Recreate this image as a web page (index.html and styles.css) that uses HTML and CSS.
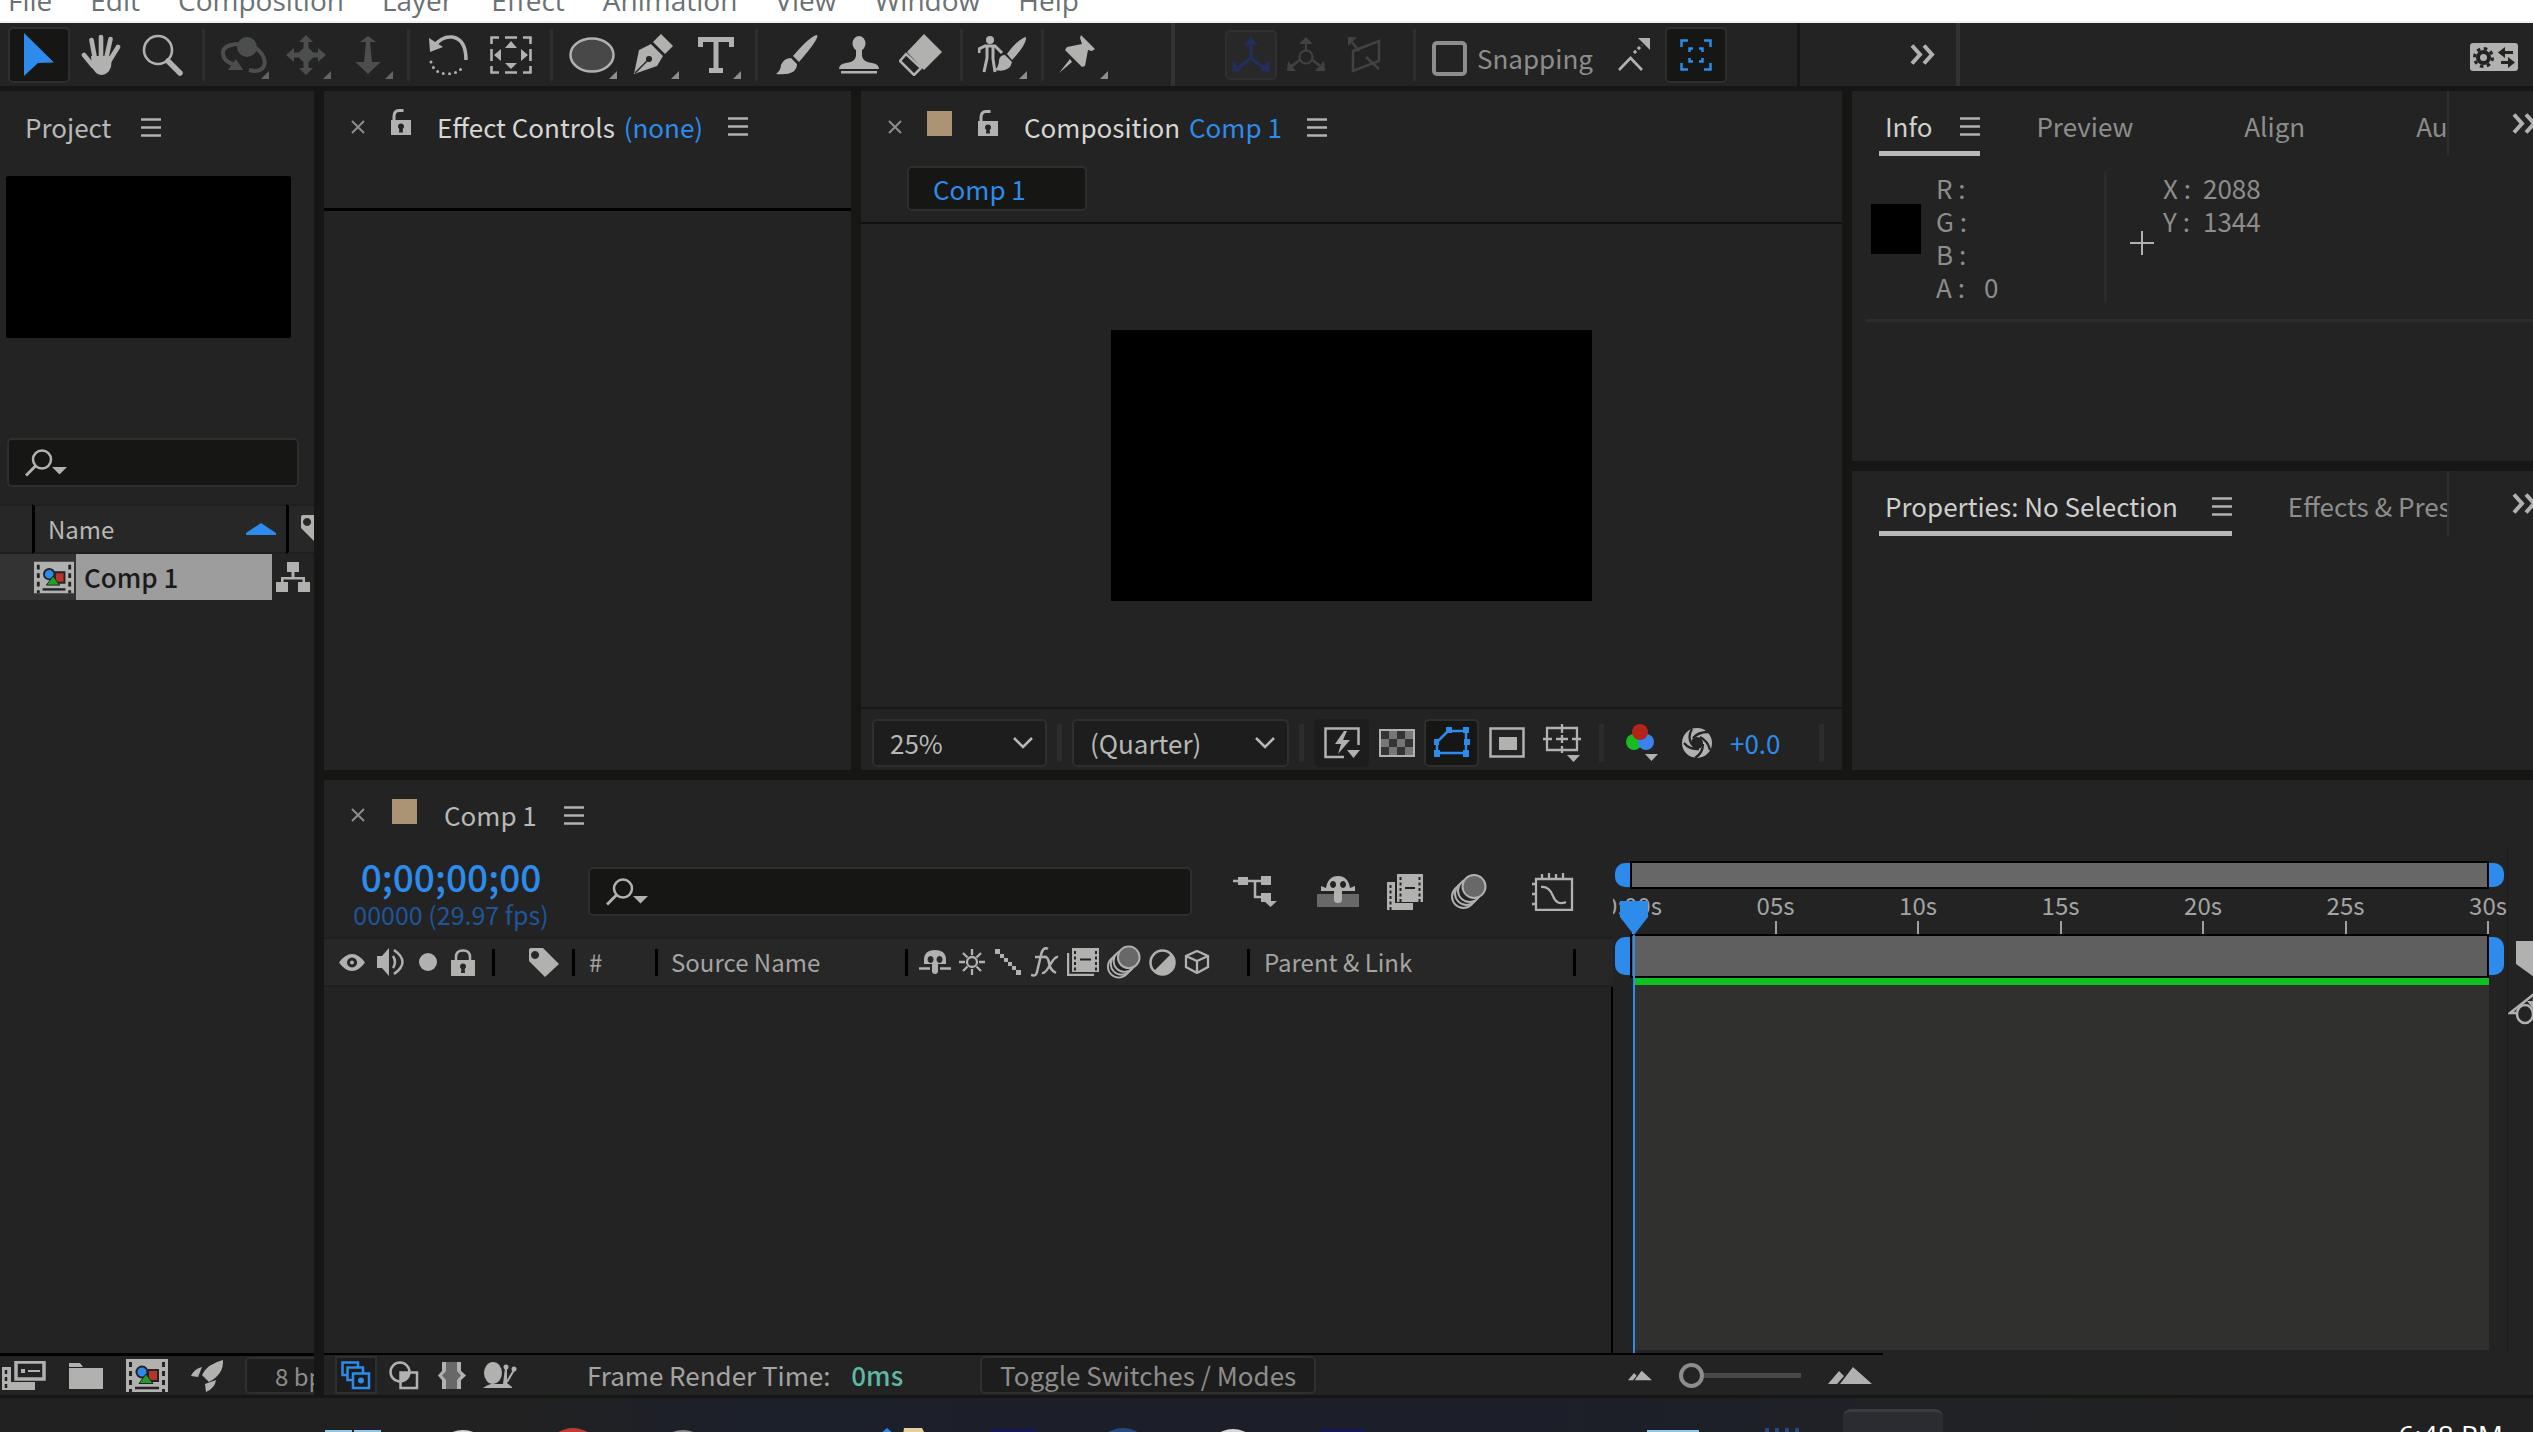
FILE: index.html
```html
<!DOCTYPE html>
<html lang="en">
<head>
<meta charset="utf-8">
<title>Comp 1</title>
<link rel="stylesheet" href="styles.css">
</head>
<body>
<svg class="sprite" aria-hidden="true">
  <symbol id="lock-open" viewBox="0 0 22 27"><path d="M4 12V7.500Q4 1.500 9 1.500H13.500" fill="none" stroke="currentColor" stroke-width="3"/><path fill-rule="evenodd" d="M1 11H21V26H1ZM11 14.500a3 3 0 0 0-1.700 5.500L9 23.500H13L12.700 20A3 3 0 0 0 11 14.500Z" fill="currentColor"/></symbol>
  <symbol id="lock" viewBox="0 0 24 27"><path d="M5 12V8Q5 1.500 12 1.500T19 8V12" fill="none" stroke="currentColor" stroke-width="2.500"/><path fill-rule="evenodd" d="M0 11H24V27H0ZM12 14.500a3 3 0 0 0-1.700 5.500L10 24H14L13.700 20A3 3 0 0 0 12 14.500Z" fill="currentColor"/></symbol>
  <symbol id="menu" viewBox="0 0 20 19"><path d="M0 1.500H20M0 9.500H20M0 17.500H20" stroke="currentColor" stroke-width="2.500"/></symbol>
  <symbol id="close" viewBox="0 0 14 14"><path d="M1 1L13 13M13 1L1 13" stroke="currentColor" stroke-width="2"/></symbol>
  <symbol id="search" viewBox="0 0 42 28"><circle cx="17" cy="10.500" r="9" fill="none" stroke="currentColor" stroke-width="2.500"/><path d="M10.500 17L1 26.500" stroke="currentColor" stroke-width="3"/><path d="M27 18H42L34.500 25.500Z" fill="currentColor"/></symbol>
  <symbol id="more" viewBox="0 0 26 21"><path d="M2 1.500L10 10.500L2 19.500M14 1.500L22 10.500L14 19.500" fill="none" stroke="currentColor" stroke-width="4"/></symbol>
  <symbol id="comp" viewBox="0 0 42 33"><path d="M0 0H42V33H0Z" fill="#b1b1af"/><path d="M4.500 3V33M37.500 3V33" stroke="#232323" stroke-width="3" stroke-dasharray="5 4"/><path d="M9 29H33" stroke="#232323" stroke-width="2.500"/><path d="M22 11H32V22H22Z" fill="#b8342b" stroke="#232323" stroke-width="2"/><circle cx="16" cy="13" r="5.500" fill="#2d8ceb" stroke="#232323" stroke-width="2"/><path d="M20 15L27 24.500H13Z" fill="#1fa02a" stroke="#232323" stroke-width="1"/></symbol>
  <symbol id="tag" viewBox="0 0 30 29"><path fill-rule="evenodd" d="M0 2Q0 0 2 0H14L30 16L16 29L0 13ZM6 3a4 4 0 1 0 .1 0Z" fill="currentColor"/></symbol>
  <symbol id="shy" viewBox="0 0 32 26"><path fill-rule="evenodd" d="M5 15V11Q5 1 16 1T27 11V15H19V22Q19 25 16 25T13 22V15ZM11.500 7a3 3.500 0 1 0 .1 0ZM20.500 7a3 3.500 0 1 0 .1 0Z" fill="currentColor"/><path d="M0 19.500H11M21 19.500H32" stroke="currentColor" stroke-width="2.500"/></symbol>
  <symbol id="film" viewBox="0 0 32 28"><path d="M1 5V27H27" fill="none" stroke="currentColor" stroke-width="2.500"/><path d="M5 0H32V24H5Z" fill="currentColor"/><path d="M8 3V24M29 3V24" stroke="#232323" stroke-width="2" stroke-dasharray="3 2.500"/><path d="M13 11.500H24" stroke="#232323" stroke-width="2"/></symbol>
  <symbol id="blur" viewBox="0 0 36 35"><g fill="#232323" stroke="currentColor" stroke-width="2"><circle cx="12.500" cy="22.500" r="11.500"/><circle cx="15.500" cy="19.500" r="11.500"/><circle cx="18.500" cy="16.500" r="11.500"/><circle cx="23" cy="12.500" r="11.500" fill="#686868"/></g></symbol>
  <symbol id="down" viewBox="0 0 20 12"><path d="M1 1L10 10L19 1" fill="none" stroke="currentColor" stroke-width="2.500"/></symbol>
  <symbol id="hills" viewBox="0 0 44 17"><path d="M0 17L11 4L16 9L9 17ZM12 17L25 0L44 17Z" fill="currentColor"/></symbol>
</svg>

<nav class="menubar" aria-label="Main menu">
  <a href="#">File</a><a href="#">Edit</a><a href="#">Composition</a><a href="#">Layer</a><a href="#">Effect</a><a href="#">Animation</a><a href="#">View</a><a href="#">Window</a><a href="#">Help</a>
</nav>

<header class="toolbar">
  <div class="tools">
    <button class="tool active" aria-label="Selection tool"><svg width="30" height="43"><path d="M0 0L30 29.500L14 30L0 43Z" fill="#2d8ceb"/></svg></button>
    <button class="tool" aria-label="Hand tool"><svg width="40" height="41" viewBox="0 0 40 41"><g stroke="currentColor" stroke-width="4.600" stroke-linecap="round"><path d="M14 25L10.500 6M20 22V3M25.500 23L29.500 5M29 26L37 13M12 32L3 21"/></g><path d="M10 22L31 22L30 33Q27 41 20 41Q14 40 11 33Z" fill="currentColor"/></svg></button>
    <button class="tool" aria-label="Zoom tool"><svg width="42" height="42" fill="none" stroke="currentColor"><circle cx="16" cy="16" r="14" stroke-width="2.600"/><path d="M26 27L38 39" stroke-width="5.500" stroke-linecap="round"/></svg></button>
  </div>
  <span class="rule"></span>
  <div class="tools">
    <button class="tool more off" aria-label="Orbit tool"><svg width="46" height="38"><circle cx="26" cy="11" r="10" fill="currentColor"/><path d="M17 8Q1 9 2 18Q3 26 14 29M35 12Q46 21 43 30Q39 37 28 34" fill="none" stroke="currentColor" stroke-width="4"/><path d="M15 23L22 34H7Z" fill="currentColor"/></svg></button>
    <button class="tool more off" aria-label="Pan tool"><svg width="40" height="42"><path d="M20 1L27 8H22.500V14L27 18.500H32V14L40 21L32 28V23.500H27L22.500 28V34H27L20 41L13 34H17.500V28L13 23.500H8V28L0 21L8 14V18.500H13L17.500 14V8H13Z" fill="currentColor"/><circle cx="20" cy="21" r="7" fill="currentColor"/></svg></button>
    <button class="tool more off" aria-label="Dolly tool"><svg width="26" height="38"><path d="M13 0L21 6H15L17 26H25.500L13 38L.5 26H9L11 6H5Z" fill="currentColor"/></svg></button>
  </div>
  <span class="rule"></span>
  <div class="tools">
    <button class="tool" aria-label="Rotate tool"><svg width="42" height="42"><path d="M6 12Q14 2 24 3Q38 5 38 26" fill="none" stroke="currentColor" stroke-width="3.500"/><path d="M1 4L2 18L15 13Z" fill="currentColor"/><path d="M3 28Q6 40 20 40Q32 39 36 31" fill="none" stroke="currentColor" stroke-width="3" stroke-linecap="round" stroke-dasharray="0 6"/></svg></button>
    <button class="tool" aria-label="Pan behind tool"><svg width="42" height="38"><path d="M1.500 8V1.500H9M15 1.500H27M33 1.500H40.500V8M40.500 30V36.500H33M27 36.500H15M9 36.500H1.500V30M1.500 13V25M40.500 13V25" fill="none" stroke="currentColor" stroke-width="2.600"/><path d="M21 5L27 12H15ZM21 33L15 27H27ZM4 19L11 13V25ZM38 19L31 13V25Z" fill="currentColor"/></svg></button>
  </div>
  <span class="rule"></span>
  <div class="tools">
    <button class="tool more" aria-label="Ellipse tool"><svg width="46" height="36"><ellipse cx="23" cy="18" rx="21.500" ry="16.500" fill="#484848" stroke="currentColor" stroke-width="2.500"/></svg></button>
    <button class="tool more" aria-label="Pen tool"><svg width="42" height="42"><path d="M1 40L6 16L18 10L30 22L24 32ZM2 39L15 26" fill="currentColor"/><path d="M2 39L15 26" stroke="#232323" stroke-width="1.500"/><circle cx="16" cy="25" r="3" fill="#232323"/><path d="M20 8L28 0L40 12L32 20Z" fill="currentColor"/></svg></button>
    <button class="tool more" aria-label="Type tool"><svg width="36" height="36"><path d="M0 0H36V10H31V5H20.500V31H25V36H11V31H15.500V5H5V10H0Z" fill="currentColor"/></svg></button>
  </div>
  <span class="rule"></span>
  <div class="tools">
    <button class="tool" aria-label="Brush tool"><svg width="42" height="42"><path d="M41 1Q44 4 23 28L17 22Q34 2 41 1ZM15 24L21 30Q21 42 0 40Q5 36 5 31Q8 24 15 24Z" fill="currentColor"/></svg></button>
    <button class="tool" aria-label="Clone stamp tool"><svg width="42" height="38"><ellipse cx="21" cy="7.500" rx="6.500" ry="7.500" fill="currentColor"/><path d="M18 12H24V20Q25 26 34 27Q41 28 41 33H1Q1 28 8 27Q17 26 18 20ZM3 35H39V37.500H3Z" fill="currentColor"/></svg></button>
    <button class="tool" aria-label="Eraser tool"><svg width="44" height="42"><path d="M25 0L43 18L25 36L8 18Z" fill="currentColor"/><path d="M7 20L22 34L15 41L1 27Z" fill="#232323" stroke="currentColor" stroke-width="2.500"/></svg></button>
  </div>
  <span class="rule"></span>
  <div class="tools">
    <button class="tool more" aria-label="Roto brush tool"><svg width="48" height="38"><circle cx="12" cy="4" r="4" fill="currentColor"/><path d="M1 17V13L7 10H17L24 17M9 10V22L6 36M15 10V23L17 36" fill="none" stroke="currentColor" stroke-width="3"/><path d="M48 1Q49 8 34 24L29 18Q40 3 48 1ZM27 19L34 26Q32 37 17 34Q21 30 21 24Q22 19 27 19Z" fill="currentColor"/></svg></button>
  </div>
  <span class="rule"></span>
  <div class="tools">
    <button class="tool more" aria-label="Puppet pin tool"><svg width="48" height="40"><path d="M22 0L36 14L33 16L29 15L26 31L23 32L6 15L8 12L23 9L21 3ZM11 24L13 27L0 38Z" fill="currentColor"/></svg></button>
  </div>
  <div class="axes">
    <button class="tool axis framed" aria-label="Local axis mode"><svg width="40" height="36" fill="currentColor"><path d="M18.500 5H21.500V20L33 29L31 32L20 23L9 32L7 29L18.500 20ZM20 0L27 8H13ZM2 23L10 34L1 35ZM38 23L39 35L29 34Z"/></svg></button>
    <button class="tool axis dim" aria-label="World axis mode"><svg width="40" height="36" fill="currentColor"><path d="M19 5H21V13H19ZM14 24L7 30L5 28L13 22ZM26 24L33 30L35 28L27 22ZM20 0L27 7H13ZM2 24L10 34L1 34ZM38 24L39 34L29 34Z"/><circle cx="20" cy="20" r="6.500" fill="none" stroke="currentColor" stroke-width="2"/></svg></button>
    <button class="tool axis dim" aria-label="View axis mode"><svg width="34" height="36" fill="none" stroke="currentColor" stroke-width="2.500"><path d="M6 14L32 4V24L6 34ZM19 20L32 32M12 14L4 4"/><path d="M1 0H10L1 9Z" fill="currentColor" stroke="none"/></svg></button>
  </div>
  <span class="rule"></span>
  <label class="snapping"><input type="checkbox">Snapping</label>
  <button class="tool" aria-label="Snap to edges"><svg width="34" height="34"><path d="M2 32L13.500 20L25 32" fill="none" stroke="currentColor" stroke-width="2.600"/><path d="M17 15L25 7" stroke="currentColor" stroke-width="3" stroke-dasharray="3 2.500"/><path d="M21 0H33V12Z" fill="currentColor"/></svg></button>
  <button class="tool active" aria-label="Snap to features"><svg width="32" height="32" fill="none" stroke="#2d8ceb" stroke-width="2.500"><path d="M1.500 8V1.500H8M24 1.500H30.500V8M30.500 24V30.500H24M8 30.500H1.500V24M9.500 13V9.500H13M19 9.500H22.500V13M22.500 19V22.500H19M13 22.500H9.500V19"/></svg></button>
  <div class="overflow"><button class="plain" aria-label="More tools"><svg width="26" height="21"><use href="#more"/></svg></button></div>
  <button class="plain workspace" aria-label="Workspace settings"><svg width="48" height="28"><rect width="48" height="28" rx="3" fill="#b1b1af"/><circle cx="13.500" cy="14.500" r="5.500" fill="none" stroke="#232323" stroke-width="4"/><circle cx="13.500" cy="14.500" r="9" fill="none" stroke="#232323" stroke-width="3" stroke-dasharray="3.500 3.570"/><path d="M28 9.500L35 4V8H43V11H35V15ZM45 19.500L38 14V18H31V21H38V25Z" fill="#232323"/></svg></button>
</header>

<main class="workspace-grid">
  <section class="panel project">
    <div class="panel-head">
      <h2>Project</h2>
      <button class="plain" aria-label="Project menu"><svg width="20" height="19"><use href="#menu"/></svg></button>
    </div>
    <div class="thumb"></div>
    <label class="search"><svg width="42" height="28"><use href="#search"/></svg><input type="search" aria-label="Search project"></label>
    <table class="items">
      <thead><tr><th class="lead"></th><th class="name"><div>Name<svg width="30" height="12"><path d="M15 0L30 10V12H0V10Z" fill="#2d8ceb"/></svg></div></th><th class="label"><svg width="30" height="29"><use href="#tag"/></svg></th></tr></thead>
      <tbody><tr><td class="lead"><svg width="40" height="33"><use href="#comp"/></svg></td><td class="name">Comp 1</td><td class="label"><svg width="34" height="31"><path d="M11 0H23V10H18.500V15H29V20H34V30H22V20H26.500V17.500H7.500V20H12V30H0V20H5V15H15.500V10H11Z" fill="currentColor"/></svg></td></tr></tbody>
    </table>
    <div class="project-foot">
      <button class="plain" aria-label="Interpret footage"><svg width="44" height="29"><path d="M14 1H42V18H14Z" fill="none" stroke="currentColor" stroke-width="3.500"/><path d="M19 8H23V12H19ZM26 9H38V11H26Z" fill="currentColor"/><path d="M0 6H9V21H33V29H0Z" fill="currentColor"/><path d="M4 9V29" stroke="#232323" stroke-width="2.500" stroke-dasharray="4 3"/></svg></button>
      <button class="plain" aria-label="New folder"><svg width="34" height="26"><path d="M0 0H11L14 4H0ZM0 5H34V26H0Z" fill="currentColor"/></svg></button>
      <button class="plain" aria-label="New composition"><svg width="42" height="33"><use href="#comp"/></svg></button>
      <button class="plain" aria-label="Project settings"><svg width="33" height="32"><path d="M32 0Q33 14 18 22L11 15Q16 4 32 0ZM11 7L7 17L0 16Q3 9 11 7ZM25 20Q24 28 15 32L14 24Z" fill="currentColor"/></svg></button>
      <button class="depth">8 bpc</button>
    </div>
  </section>

  <div class="right-side">
    <div class="upper">
      <section class="panel effects">
        <div class="panel-head tall">
          <button class="plain close" aria-label="Close"><svg width="14" height="14"><use href="#close"/></svg></button>
          <svg class="raised" width="22" height="27"><use href="#lock-open"/></svg>
          <h2 class="bright">Effect Controls <span class="accent">(none)</span></h2>
          <button class="plain" aria-label="Effect controls menu"><svg width="20" height="19"><use href="#menu"/></svg></button>
        </div>
      </section>

      <section class="panel composition">
        <div class="panel-head">
          <button class="plain close" aria-label="Close"><svg width="14" height="14"><use href="#close"/></svg></button>
          <span class="swatch raised"></span>
          <svg class="raised" width="22" height="27"><use href="#lock-open"/></svg>
          <h2 class="bright">Composition <span class="accent">Comp 1</span></h2>
          <button class="plain" aria-label="Composition menu"><svg width="20" height="19"><use href="#menu"/></svg></button>
        </div>
        <div class="flow"><button class="crumb">Comp 1</button></div>
        <div class="viewer"><div class="canvas"></div></div>
        <div class="viewer-bar">
          <div class="pick zoom"><select aria-label="Magnification"><option>25%</option></select><svg width="20" height="12"><use href="#down"/></svg></div>
          <span class="bar"></span>
          <div class="pick res"><select aria-label="Resolution"><option>(Quarter)</option></select><svg width="20" height="12"><use href="#down"/></svg></div>
          <span class="bar"></span>
          <div class="view-icons">
            <button class="view fast" aria-label="Fast previews"><svg width="36" height="32"><path d="M20 30H1.500V1.500H34.500V18" fill="none" stroke="currentColor" stroke-width="2.500"/><path d="M20 4L11 17H17L14 27L26 13H19L23 4ZM23 23H36L29.500 31Z" fill="currentColor"/></svg></button>
            <button class="view" aria-label="Transparency grid"><svg width="36" height="28"><path d="M1 1H35V27H1Z" fill="#343434" stroke="#b1b1af" stroke-width="2"/><path d="M10 2H18V10H10ZM26 2H34V10H26ZM2 10H10V18H2ZM18 10H26V18H18ZM10 18H18V26H10ZM26 18H34V26H26Z" fill="#777"/></svg></button>
            <button class="view on" aria-label="Mask visibility"><svg width="36" height="31"><path d="M3 26V15L14 4H32V26Z" fill="none" stroke="currentColor" stroke-width="2.500"/><path d="M0 23H6V30H0ZM0 12H5V18H0ZM12 0H18V6H12ZM29 0H35V6H29ZM30 12H36V18H30ZM29 23H35V30H29Z" fill="currentColor"/></svg></button>
            <button class="view" aria-label="Region of interest"><svg width="36" height="31"><path d="M1.500 1.500H34.500V29.500H1.500Z" fill="none" stroke="currentColor" stroke-width="2.500"/><path d="M10 10H28V23H10Z" fill="currentColor"/></svg></button>
            <button class="view" aria-label="Grid and guides"><svg width="38" height="38"><path d="M4 4H34V26H4ZM19 0V9M19 22V29M0 15H9M29 15H38M13 15H25M19 11V19" fill="none" stroke="currentColor" stroke-width="2.300"/><path d="M24 31H37L30.500 38Z" fill="currentColor"/></svg></button>
          </div>
          <span class="bar"></span>
          <div class="view-icons tail">
            <button class="view" aria-label="Channels"><svg width="34" height="37"><circle cx="9" cy="18" r="8" fill="#18bb22"/><circle cx="21" cy="18" r="8" fill="#3b82f0"/><circle cx="15" cy="8" r="8" fill="#b3241c"/><path d="M20 30H33L26.500 37Z" fill="currentColor"/></svg></button>
            <button class="view" aria-label="Reset exposure"><svg width="32" height="32"><circle cx="16" cy="16" r="15" fill="currentColor"/><circle cx="16" cy="16" r="6" fill="#232323"/><path d="M12 11Q17 5 27 5M19 10Q27 14 29 23M22 17Q22 26 14 31M18 22Q9 23 3 16M11 18Q6 10 11 2" fill="none" stroke="#232323" stroke-width="2.300"/></svg></button>
            <button class="exposure accent">+0.0</button>
          </div>
          <span class="bar"></span>
        </div>
      </section>

      <div class="side">
        <section class="panel info">
          <div class="tabs">
            <div class="tab-list">
              <div class="tab current"><a href="#">Info</a><button class="plain" aria-label="Info menu"><svg width="20" height="19"><use href="#menu"/></svg></button></div>
              <a class="tab" href="#">Preview</a><a class="tab" href="#">Align</a><a class="tab" href="#">Audio</a>
            </div>
            <button class="plain overflow-tabs" aria-label="More panels"><svg width="26" height="21"><use href="#more"/></svg></button>
          </div>
          <div class="readout">
            <div class="sample"></div>
            <dl class="rgba"><dt>R :</dt><dd></dd><dt>G :</dt><dd></dd><dt>B :</dt><dd></dd><dt>A :</dt><dd>0</dd></dl>
            <svg class="cross" width="24" height="24"><path d="M12 0V24M0 12H24" stroke="#b1b1af" stroke-width="2"/></svg>
            <dl class="xy"><dt>X :</dt><dd>2088</dd><dt>Y :</dt><dd>1344</dd></dl>
          </div>
        </section>
        <section class="panel properties">
          <div class="tabs">
            <div class="tab-list">
              <div class="tab current"><a href="#">Properties: No Selection</a><button class="plain" aria-label="Properties menu"><svg width="20" height="19"><use href="#menu"/></svg></button></div>
              <a class="tab" href="#">Effects &amp; Presets</a>
            </div>
            <button class="plain overflow-tabs" aria-label="More panels"><svg width="26" height="21"><use href="#more"/></svg></button>
          </div>
        </section>
      </div>
    </div>

    <section class="panel timeline">
      <div class="panel-head">
        <button class="plain close" aria-label="Close"><svg width="14" height="14"><use href="#close"/></svg></button>
        <span class="swatch raised"></span>
        <h2>Comp 1</h2>
        <button class="plain" aria-label="Timeline menu"><svg width="20" height="19"><use href="#menu"/></svg></button>
      </div>
      <div class="timeline-grid">
        <div class="layers">
          <div class="controls">
            <div class="clock"><button class="timecode">0;00;00;00</button><span class="frames">00000 (29.97 fps)</span></div>
            <label class="search"><svg width="42" height="28"><use href="#search"/></svg><input type="search" aria-label="Search layers"></label>
            <div class="switches">
              <button class="plain flowchart" aria-label="Mini flowchart"><svg width="44" height="31"><path d="M5 1H15V9H5ZM28 0H38V9H28ZM28 17H38V26H28ZM31 25H44L37.500 31Z" fill="currentColor"/><path d="M0 5H28M22 5V21H28" fill="none" stroke="currentColor" stroke-width="2.500"/></svg></button>
              <button class="plain" aria-label="Hide shy layers"><svg width="42" height="32"><path d="M0 18H42V31H0Z" fill="#686868"/><path fill-rule="evenodd" d="M4 15V10L9 12Q11 0 21 0T33 12L38 10V15H25V24Q25 27 21 27T17 24V15ZM16 5a3 3.500 0 1 0 .1 0ZM26 5a3 3.500 0 1 0 .1 0Z" fill="currentColor"/></svg></button>
              <button class="plain" aria-label="Frame blending"><svg width="36" height="36"><path d="M0 8H8V29H26V36H0Z" fill="currentColor"/><path d="M10 0H36V28H10Z" fill="currentColor"/><path d="M13.500 3V28M32.500 3V28M3.500 11V36" stroke="#232323" stroke-width="2" stroke-dasharray="3 2.500"/><path d="M18 14H28" stroke="#232323" stroke-width="2"/></svg></button>
              <button class="plain" aria-label="Motion blur"><svg width="36" height="35"><use href="#blur"/></svg></button>
              <button class="plain graph" aria-label="Graph editor"><svg width="42" height="38" fill="none" stroke="currentColor" stroke-width="2.300"><path d="M4 6H40V37H4ZM10 6V1M17 6V0M24 6V1M31 6V0M4 11H0M4 21H0M4 31H0M9 14Q17 13 21 23T34 29"/></svg></button>
            </div>
          </div>
          <div class="columns">
            <div class="col av">
              <svg width="26" height="17"><path fill-rule="evenodd" d="M0 8.500Q6 0 13 0T26 8.500Q20 17 13 17T0 8.500ZM13 3.500a5 5 0 1 0 .1 0Z" fill="currentColor"/><circle cx="13" cy="8.500" r="2" fill="currentColor"/></svg>
              <svg width="30" height="28"><path d="M0 8H5L12 0V28L5 20H0Z" fill="currentColor"/><path d="M16 8Q20 14 16 20M17 2Q34 14 17 26" fill="none" stroke="currentColor" stroke-width="2.500"/></svg>
              <svg width="20" height="18"><circle cx="9" cy="9" r="9" fill="currentColor"/></svg>
              <svg width="24" height="27"><use href="#lock"/></svg>
            </div>
            <div class="col tag-col"><svg width="30" height="29"><use href="#tag"/></svg></div>
            <div class="col num">#</div>
            <div class="col source">Source Name</div>
            <div class="col modes">
              <svg width="32" height="26"><use href="#shy"/></svg>
              <svg width="26" height="26" fill="none" stroke="currentColor" stroke-width="2.300"><circle cx="13" cy="13" r="5"/><path d="M13 0V6M13 20V26M0 13H6M20 13H26M4 4L8.500 8.500M17.500 17.500L22 22M22 4L17.500 8.500M8.500 17.500L4 22"/></svg>
              <svg width="30" height="26"><path d="M2 0H7V5H2ZM7 5H11V9H7ZM11 9H15V13H11ZM15 13H19V17H15ZM19 17H23V21H19ZM23 21H28V26H23Z" fill="currentColor"/></svg>
              <svg width="28" height="30" fill="none" stroke="currentColor" stroke-width="2.500"><path d="M17 2Q12 -1 10 8L6 25Q5 30 0 28M4 10H16M13 10Q17 9 18 16T25 26M27 10Q24 9 19 18T11 26"/></svg>
              <svg width="32" height="28"><use href="#film"/></svg>
              <svg width="34" height="34"><use href="#blur"/></svg>
              <svg width="27" height="27"><circle cx="13.500" cy="13.500" r="12" fill="none" stroke="currentColor" stroke-width="2.500"/><path d="M22 5A12 12 0 0 1 5 22Z" fill="currentColor"/></svg>
              <svg width="26" height="24" fill="none" stroke="currentColor" stroke-width="2.300"><path d="M13 1L24 6V17L13 23L2 17V6ZM2 6L13 11L24 6M13 11V23"/></svg>
            </div>
            <div class="col parent">Parent &amp; Link</div>
            <div class="col end"></div>
          </div>
          <div class="layer-space"></div>
        </div>

        <div class="time">
          <div class="navigator"><span class="cap start"></span><span class="range"></span><span class="cap finish"></span></div>
          <div class="ruler">
            <span class="tick">0:00s</span><span class="tick">05s</span><span class="tick">10s</span><span class="tick">15s</span><span class="tick">20s</span><span class="tick">25s</span><span class="tick">30s</span>
          </div>
          <div class="workarea"><span class="cap start"></span><span class="range"></span><span class="cap finish"></span></div>
          <div class="tracks"></div>
          <div class="playhead"><svg width="28" height="34"><path d="M0 0H28V16L14 34L0 16Z" fill="#2d8ceb"/></svg><i></i></div>
        </div>
        <div class="edge">
          <svg width="26" height="36"><path d="M8 0H26V36L8 23Z" fill="#b1b1af"/></svg>
          <svg width="26" height="34"><path d="M26 2L2 21H10M26 6V12" fill="none" stroke="#b1b1af" stroke-width="2.500"/><ellipse cx="17" cy="22" rx="8" ry="9" fill="none" stroke="#b1b1af" stroke-width="2.500"/><path d="M19 9H26V18Z" fill="#b1b1af"/></svg>
        </div>
      </div>
      <div class="timeline-foot">
        <div class="foot-main">
          <div class="panes">
            <button class="pane on" aria-label="Layer switches"><svg width="30" height="29" fill="#1b1b1a" stroke="currentColor" stroke-width="2.500"><path d="M1.500 1.500H17V14H1.500Z"/><path d="M6.500 6.500H22V19H6.500Z"/><path d="M12 12.500H28V27H12Z"/><circle cx="20" cy="19.500" r="3" fill="currentColor" stroke="none"/></svg></button>
            <button class="pane" aria-label="Transfer controls"><svg width="30" height="29"><circle cx="11" cy="11" r="9.500" fill="none" stroke="currentColor" stroke-width="2.500"/><path d="M11.500 11.500H28V27H11.500Z" fill="none" stroke="currentColor" stroke-width="2.500"/><path d="M11 11H21Q20 20 11 21Z" fill="currentColor"/></svg></button>
            <button class="pane" aria-label="In and out columns"><svg width="30" height="29"><path d="M5 1H24V10L29 14.500L24 19V28H5V19L1 14.500L5 10Z" fill="#686868"/><path d="M5 1H9V10L5 14.500L9 19V28H5V19L1 14.500L5 10ZM24 1H20V10L24 14.500L20 19V28H24V19L29 14.500L24 10Z" fill="currentColor"/></svg></button>
            <button class="pane" aria-label="Render time"><svg width="34" height="28"><ellipse cx="10" cy="12" rx="9" ry="11" fill="currentColor"/><path d="M0 27Q4 24 8 23H20L22 7L24 8V22L29 26V27Z" fill="currentColor"/><path d="M24 21L31 9" stroke="currentColor" stroke-width="2"/><circle cx="23" cy="6" r="2.500" fill="currentColor"/><circle cx="31" cy="8" r="2.500" fill="currentColor"/></svg></button>
          </div>
          <p class="render">Frame Render Time: <strong>0ms</strong></p>
          <button class="toggle">Toggle Switches / Modes</button>
        </div>
        <div class="foot-zoom">
          <svg width="24" height="11"><use href="#hills"/></svg>
          <input type="range" min="0" max="100" value="0" aria-label="Timeline zoom">
          <svg width="44" height="17"><use href="#hills"/></svg>
        </div>
      </div>
    </section>
  </div>
</main>

<footer class="taskbar">
  <div class="apps">
    <button aria-label="Start"><svg width="56" height="56"><path d="M0 0H27V27H0ZM29 0H56V27H29Z" fill="#8fc7e8"/></svg></button>
    <button aria-label="Search"><svg width="56" height="56"><circle cx="28" cy="28" r="28" fill="#d8d8d8"/></svg></button>
    <button aria-label="Browser"><svg width="56" height="58"><circle cx="28" cy="28" r="28" fill="#c33a2e"/></svg></button>
    <button aria-label="Settings"><svg width="56" height="56"><circle cx="28" cy="28" r="28" fill="#8c8c8c"/></svg></button>
    <button aria-label="Player"></button>
    <button aria-label="Editor"><svg width="50" height="58"><path d="M0 8L9 0L18 8V58H0Z" fill="#2d8ceb"/><path d="M26 0H44L48 8V58H18Z" fill="#e8d09a"/></svg></button>
    <button aria-label="After Effects"><svg width="50" height="57"><rect width="50" height="57" rx="8" fill="#16165c"/></svg></button>
    <button aria-label="Mail"><svg width="56" height="58"><circle cx="28" cy="28" r="28" fill="#234a82"/></svg></button>
    <button aria-label="Chat"><svg width="56" height="57"><circle cx="28" cy="28" r="28" fill="#d8d8d8"/></svg></button>
    <button aria-label="Media Encoder"><svg width="50" height="57"><rect width="50" height="57" rx="8" fill="#16165c"/></svg></button>
    <button aria-label="Notes"></button>
    <button aria-label="Files"></button>
    <button aria-label="Explorer"><svg width="52" height="56"><rect width="52" height="56" fill="#8fc7e8"/></svg></button>
    <button aria-label="Recorder"><svg width="38" height="58"><path d="M3 0V58M13 0V58M23 0V58M33 0V58" stroke="#234a82" stroke-width="4"/></svg></button>
    <button class="running" aria-label="Running app"></button>
  </div>
  <time>6:48 PM</time>
</footer>
</body>
</html>
```
FILE: styles.css
```css
* { box-sizing: border-box; }
:root {
  --panel: #232323;
  --gap: #161614;
  --icon: #b1b1af;
  --muted: #8d8d8b;
  --text: #b8b8b6;
  --accent: #2d8ceb;
  --line: #323232;
}
body {
  margin: 0;
  height: 100vh;
  display: flex;
  flex-direction: column;
  overflow: hidden;
  background: var(--gap);
  color: var(--text);
  font: 26px/32px "Noto Sans CJK SC", "Open Sans", sans-serif;
}
svg { display: block; flex: none; }
.sprite { position: absolute; width: 0; height: 0; }
button, input, select { font: inherit; color: inherit; border: 0; margin: 0; padding: 0; background: none; }
a { color: inherit; text-decoration: none; }
h2, p, dl, dd { margin: 0; font-size: 26px; font-weight: 400; }
.plain { display: flex; align-items: center; color: var(--icon); }
.accent { color: var(--accent); }

/* menu bar */
.menubar {
  display: flex;
  align-items: flex-end;
  gap: 38px;
  height: 23px;
  padding: 0 8px 5px;
  overflow: hidden;
  flex: none;
  background: #fff;
  border-bottom: 2px solid #f0f0f0;
  color: #6b7274;
  font-family: "Open Sans", sans-serif;
  font-size: 28px;
}

/* tool bar */
.toolbar {
  display: flex;
  align-items: center;
  height: 63px;
  padding-left: 8px;
  flex: none;
  background: var(--panel);
}
.tools, .axes { display: flex; align-items: center; }
.tool {
  position: relative;
  width: 62px;
  height: 56px;
  display: flex;
  align-items: center;
  justify-content: center;
  flex: none;
  color: var(--icon);
}
.tool.off { color: #4c4e4d; }
.tool.active { background: var(--gap); border: 2px solid #2f2f2f; border-radius: 5px; }
.tool.more::after {
  content: "";
  position: absolute;
  right: 6px;
  bottom: 4px;
  border: 4px solid;
  border-color: transparent #8d8d8b #8d8d8b transparent;
}
.tool.more.off::after { border-color: transparent #646464 #646464 transparent; }
.rule { width: 3px; height: 52px; margin: 0 8px; background: #2e2e2d; flex: none; }
.axes {
  align-self: stretch;
  margin-left: 57px;
  padding: 0 12px 0 50px;
  border-left: 4px solid var(--line);
}
.tool.axis { width: 58px; }
.tool.framed { width: 52px; height: 50px; background: #282828; border: 2px solid #303030; border-radius: 5px; color: #222e5c; }
.tool.dim { color: #414243; }
.snapping { display: flex; align-items: center; gap: 10px; margin: 7px 10px 0 8px; color: var(--muted); }
.snapping input { appearance: none; width: 35px; height: 35px; border: 4px solid #8d8d8b; border-radius: 5px; }
.overflow {
  align-self: stretch;
  display: flex;
  align-items: center;
  margin-left: 70px;
  padding: 0 20px 0 110px;
  border-left: 3px solid var(--gap);
  border-right: 4px solid var(--line);
}
.workspace { margin: 4px 15px 0 auto; }

/* panels */
.workspace-grid {
  flex: 1;
  min-height: 0;
  display: grid;
  grid-template-columns: 314fr 2209fr;
  gap: 10px;
  padding: 5px 0 3px;
}
.right-side { display: grid; grid-template-rows: 679fr 615fr; gap: 10px; min-width: 0; min-height: 0; }
.upper { display: grid; grid-template-columns: 527fr 981fr 681fr; gap: 10px; min-height: 0; }
.panel { background: var(--panel); min-width: 0; min-height: 0; display: flex; flex-direction: column; overflow: hidden; }
.panel-head { display: flex; align-items: center; gap: 25px; height: 72px; padding-left: 27px; flex: none; white-space: nowrap; }
.bright { color: #d6d6d4; }
.bright .accent { margin-left: 3px; }
.close { color: var(--muted); }
.raised { margin-bottom: 8px; color: var(--icon); }
.swatch { width: 25px; height: 25px; background: #ab9473; }
.effects .tall { height: 120px; padding-bottom: 46px; border-bottom: 3px solid #000; }

.search {
  display: flex;
  align-items: center;
  gap: 10px;
  height: 49px;
  padding: 0 16px;
  background: var(--gap);
  border: 2px solid #2e2e2d;
  border-radius: 5px;
  color: var(--icon);
}
.search input { flex: 1; min-width: 0; outline: 0; }

/* project */
.project .panel-head { gap: 30px; padding-left: 25px; }
.thumb { height: 162px; margin: 13px 23px 0 6px; background: #000; border-radius: 2px; flex: none; }
.project .search { margin: 100px 15px 17px 7px; flex: none; }
.items { display: block; }
.items thead, .items tbody { display: block; }
.items tr { display: flex; }
.items th, .items td { display: flex; align-items: center; padding: 0; font-weight: 400; text-align: left; overflow: hidden; }
.items th { height: 50px; background: #272727; border-top: 2px solid #1f1f1f; border-bottom: 2px solid #1f1f1f; font-size: 24px; }
.items td { height: 46px; }
.items .lead { width: 76px; }
.items td.lead { background: #333; padding-left: 34px; }
.items .name { flex: 1; }
.items td.name { background: #9d9d9d; color: #1a1a1a; padding-left: 8px; font-weight: 500; }
.items .label { width: 42px; padding-left: 4px; color: var(--icon); }
.items th.lead { width: 32px; }
.items th.name { padding: 0 10px 0 13px; border-left: 3px solid #000; }
.items th.name div { width: 100%; display: flex; align-items: center; justify-content: space-between; }
.items th.label { width: 28px; padding-left: 12px; border-left: 3px solid #000; }
.project-foot { display: flex; align-items: center; gap: 23px; height: 42px; margin-top: auto; padding-left: 2px; border-top: 3px solid #000; overflow: hidden; }
.depth { width: 100px; height: 37px; flex: none; background: #1d1d1d; border: 2px solid #2f2f2f; border-radius: 5px; font-size: 24px; color: var(--muted); text-align: left; padding-left: 28px; margin-left: -2px; white-space: nowrap; }

/* composition */
.flow { height: 61px; padding: 3px 46px; flex: none; border-bottom: 2px solid #111; }
.crumb { width: 180px; height: 45px; padding-left: 24px; text-align: left; background: var(--gap); border: 2px solid #2e2e2d; border-radius: 5px; color: var(--accent); }
.viewer { flex: 1; min-height: 0; display: flex; align-items: center; justify-content: center; }
.canvas { width: 49%; aspect-ratio: 16 / 9; background: #000; }
.viewer-bar { display: flex; align-items: center; height: 63px; padding: 8px 0 2px 11px; border-top: 2px solid #181818; flex: none; }
.pick { position: relative; height: 48px; flex: none; background: #1d1d1d; border: 2px solid #2f2f2f; border-radius: 5px; }
.pick select { appearance: none; width: 100%; height: 100%; padding-left: 16px; outline: 0; }
.pick svg { position: absolute; right: 12px; top: 16px; pointer-events: none; }
.zoom { width: 175px; }
.res { width: 217px; }
.bar { width: 5px; height: 38px; margin: 0 10px; background: #2c2c2c; flex: none; }
.view-icons { display: flex; align-items: center; flex: none; }
.view { width: 55px; height: 48px; display: flex; align-items: center; justify-content: center; color: var(--icon); }
.view.fast { background: #1d1d1d; border-radius: 5px; }
.view.on { background: var(--gap); border: 2px solid #2f2f2f; border-radius: 5px; color: var(--accent); }
.exposure { margin: 0 28px 0 6px; }

/* info and properties */
.side { display: grid; grid-template-rows: 370fr 299fr; gap: 10px; min-width: 0; min-height: 0; }
.tabs { display: flex; height: 65px; padding-left: 27px; flex: none; }
.tab-list { flex: 1; display: flex; min-width: 0; overflow: hidden; border-right: 2px solid #2e2e2d; }
.tab { display: flex; align-items: center; padding: 10px 55px 5px 56px; color: var(--muted); flex: none; white-space: nowrap; }
.tab.current { gap: 28px; padding: 10px 0 0 6px; border-bottom: 5px solid #b8b8b6; color: #cfcfcd; }
.properties .tab.current { gap: 34px; }
.overflow-tabs { width: 84px; padding-left: 63px; flex: none; overflow: hidden; }
.readout { display: flex; height: 166px; margin-left: 14px; padding: 15px 0 0 5px; border-bottom: 3px solid #2c2c2c; color: var(--muted); }
.sample { width: 50px; height: 50px; margin-top: 33px; background: #000; }
.readout dl { display: grid; grid-template-columns: 40px auto; grid-auto-rows: 33px; align-items: center; white-space: nowrap; }
.readout .rgba { grid-template-columns: 48px auto; width: 171px; height: 132px; margin-left: 15px; border-right: 3px solid #2a2a2a; }
.cross { margin: 60px 9px 0 23px; }

/* timeline */
.timeline .panel-head { gap: 27px; height: 70px; }
.timeline-grid { flex: 1; min-height: 0; display: grid; grid-template-columns: 1289fr 894fr 26px; }
.layers, .time { display: flex; flex-direction: column; min-width: 0; min-height: 0; }
.controls { display: flex; align-items: center; height: 87px; padding: 0 0 4px 28px; flex: none; }
.controls .search { width: 604px; margin-left: 38px; }
.clock { display: flex; flex-direction: column; align-items: center; width: 198px; white-space: nowrap; }
.timecode { color: var(--accent); font-size: 37px; line-height: 44px; font-weight: 500; }
.frames { color: #1f559c; font-size: 25px; line-height: 32px; }
.switches { display: flex; align-items: center; gap: 28px; margin-left: 41px; }
.flowchart { margin-right: 12px; }
.graph { margin-left: 17px; }
.columns { display: flex; align-items: center; height: 50px; padding-left: 15px; background: #272727; border-top: 2px solid #1f1f1f; border-bottom: 2px solid #1f1f1f; flex: none; font-size: 24px; color: #a4a4a2; }
.col { display: flex; align-items: center; height: 27px; border-right: 3px solid #000; flex: none; white-space: nowrap; }
.col svg { color: var(--icon); }
.av { width: 156px; gap: 12px; }
.tag-col { width: 80px; padding-left: 34px; }
.num { width: 83px; padding-left: 14px; }
.source { width: 250px; padding-left: 13px; }
.modes { width: 342px; gap: 8px; padding-left: 11px; }
.parent { width: 326px; padding-left: 14px; }
.end { border: 0; }
.layer-space { flex: 1; border-right: 2px solid #000; }
.time { position: relative; padding: 11px 0 3px; overflow: hidden; }
.navigator, .workarea { display: flex; padding: 0 3px 0 2px; flex: none; align-items: center; }
.range { flex: 1; align-self: stretch; background: #676767; border: 2px solid #000; }
.cap { width: 15px; background: var(--accent); }
.navigator { height: 28px; }
.navigator .cap { height: 24px; }
.cap.start { border-radius: 10px 0 0 10px; }
.cap.finish { border-radius: 0 10px 10px 0; }
.ruler { display: flex; justify-content: space-between; height: 45px; padding: 0 19px 0 20px; overflow: hidden; flex: none; color: #a4a4a2; font-size: 24px; }
.tick { width: 0; display: flex; flex-direction: column; align-items: center; white-space: nowrap; }
.tick::after { content: ""; width: 2px; height: 13px; background: #a0a0a0; flex: none; }
.workarea { height: 44px; }
.workarea .cap { height: 38px; }
.workarea .range { background: #5f5f5f; }
.tracks { flex: 1; margin: 0 18px 0 20px; background: #30302e; border-top: 7px solid #10bf20; }
.playhead { position: absolute; left: 7px; top: 51px; bottom: 0; width: 28px; display: flex; flex-direction: column; align-items: center; }
.playhead i { flex: 1; width: 2px; background: var(--accent); }
.edge { display: flex; flex-direction: column; gap: 15px; padding-top: 91px; overflow: hidden; border-left: 1px solid #1b1b1b; }
.timeline-foot { display: grid; grid-template-columns: 1289fr 920fr; height: 42px; flex: none; }
.foot-main, .foot-zoom { display: flex; align-items: center; border-top: 2px solid #000; min-width: 0; white-space: nowrap; }
.foot-zoom { width: 270px; gap: 27px; padding-left: 15px; color: var(--icon); }
.panes { display: flex; gap: 6px; padding-left: 11px; }
.pane { width: 42px; height: 38px; display: flex; align-items: center; justify-content: center; color: var(--icon); }
.pane.on { color: var(--accent); background: #1d1d1d; border: 2px solid #2f2f2f; }
.render { margin-left: 66px; color: #a4a4a2; }
.render strong { margin-left: 15px; color: #5fb8a5; font-weight: 500; }
.toggle { width: 336px; height: 38px; margin-left: 77px; background: #1d1d1d; border: 2px solid #2f2f2f; border-radius: 5px; color: var(--muted); }
.foot-zoom input { appearance: none; width: 122px; height: 26px; }
.foot-zoom input::-webkit-slider-runnable-track { height: 5px; background: #484846; }
.foot-zoom input::-webkit-slider-thumb { appearance: none; width: 25px; height: 25px; margin-top: -10px; border: 4px solid #8d8d8b; border-radius: 50%; background: var(--panel); }

/* task bar */
.taskbar { height: 34px; flex: none; display: flex; justify-content: space-between; overflow: hidden; padding: 0 30px 0 298px; background: linear-gradient(90deg, #212121 20%, #1c202b 30%, #1c1e29 60%, #202226 75%, #212121 90%); color: #fff; }
.apps { display: flex; }
.apps button { width: 110px; height: 88px; display: flex; align-items: flex-end; justify-content: center; flex: none; }
.apps .running { width: 100px; margin: 11px 5px 0; background: #2b2c31; border-top: 3px solid #3a3b3e; border-radius: 8px; }
.taskbar time { padding-top: 21px; font-family: "Open Sans", sans-serif; font-size: 28px; }
```
